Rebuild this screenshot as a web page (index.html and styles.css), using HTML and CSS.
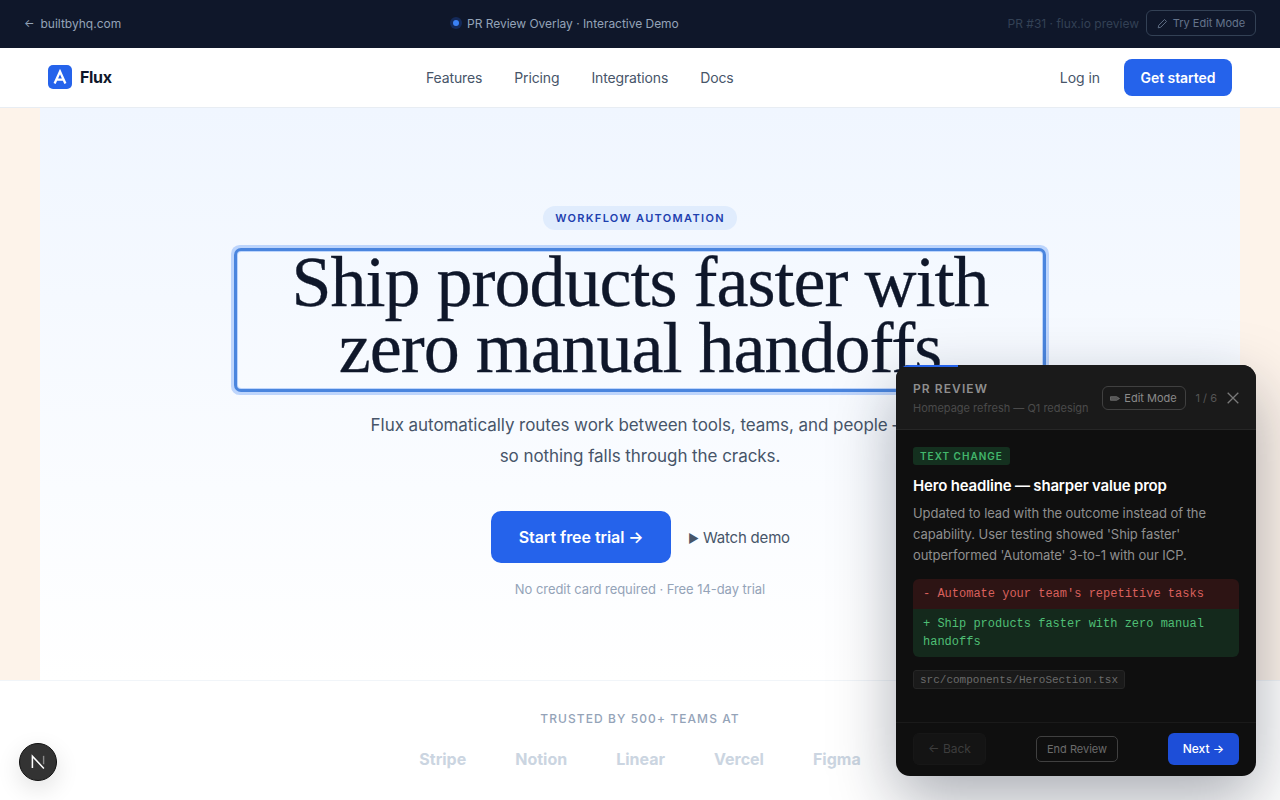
FILE: index.html
```html
<!DOCTYPE html>
<html lang="en">
<head>
<meta charset="utf-8">
<title>Flux</title>
<link rel="stylesheet" href="styles.css">
</head>
<body>
<header class="demo-bar">
  <a class="back-link"><span class="back-arrow">←</span> builtbyhq.com</a>
  <div class="demo-title"><span class="dot"></span>PR Review Overlay · Interactive Demo</div>
  <div class="demo-right">
    <span class="demo-meta">PR #31 · flux.io preview</span>
    <button class="try-btn">
      <svg class="pencil" viewBox="0 0 12 12" width="11" height="11"><path d="M8.2 1.6l2.2 2.2-6.3 6.3-2.8.6.6-2.8z" fill="none" stroke="currentColor" stroke-width="1"/></svg>
      Try Edit Mode</button>
  </div>
</header>
<nav class="site-nav">
  <div class="brand">
    <svg class="brand-mark" viewBox="0 0 24 24" width="24" height="24"><rect width="24" height="24" rx="5" fill="#2563eb"/><path d="M6.6 18.4L12 6.6l5.4 11.8M8.6 14.6h6.8" fill="none" stroke="#fff" stroke-width="2.3"/></svg>
    <span class="brand-name">Flux</span>
  </div>
  <div class="nav-links"><a>Features</a><a>Pricing</a><a>Integrations</a><a>Docs</a></div>
  <div class="nav-actions"><a class="login">Log in</a><button class="cta-small">Get started</button></div>
</nav>
<main>
  <section class="hero-wrap">
    <div class="hero">
      <span class="eyebrow">WORKFLOW AUTOMATION</span>
      <h1 class="headline"><span class="headline-text">Ship products faster with<br>zero manual handoffs</span></h1>
      <p class="sub">Flux automatically routes work between tools, teams, and people —<br>so nothing falls through the cracks.</p>
      <div class="cta-row">
        <button class="cta-main">Start free trial →</button>
        <a class="watch"><span class="play">▶</span> Watch demo</a>
      </div>
      <p class="note">No credit card required · Free 14-day trial</p>
    </div>
  </section>
  <section class="trusted">
    <p class="trusted-label">TRUSTED BY 500+ TEAMS AT</p>
    <div class="logos"><span>Stripe</span><span>Notion</span><span>Linear</span><span>Vercel</span><span>Figma</span></div>
  </section>
</main>
<button class="next-badge" aria-label="Next.js">
  <svg viewBox="0 0 20 20" width="28" height="28"><path d="M6 14.2V5.8l8.2 8.8" fill="none" stroke="#fff" stroke-width="1.1"/><path d="M14 5.6v6" fill="none" stroke="#8a8a8a" stroke-width="1"/></svg>
</button>
<aside class="review">
  <div class="progress"></div>
  <div class="review-head">
    <div class="head-text">
      <div class="head-title">PR REVIEW</div>
      <div class="head-sub">Homepage refresh — Q1 redesign</div>
    </div>
    <button class="edit-btn">
      <svg class="edit-icon" viewBox="0 0 10 5" width="10" height="5"><path d="M.5.7h6.2L9.5 2.5 6.7 4.3H.5z" fill="#555" stroke="#7a7a7a" stroke-width=".7"/></svg>
      Edit Mode</button>
    <span class="count">1 / 6</span>
    <svg class="close" viewBox="0 0 12 12" width="12" height="12"><path d="M.7.7l10.6 10.6M11.3.7L.7 11.3" stroke="#7a7a7a" stroke-width="1.3" fill="none"/></svg>
  </div>
  <div class="review-body">
    <span class="tag">TEXT CHANGE</span>
    <h2 class="change-title">Hero headline — sharper value prop</h2>
    <p class="change-desc">Updated to lead with the outcome instead of the capability. User testing showed 'Ship faster' outperformed 'Automate' 3-to-1 with our ICP.</p>
    <div class="diff">
      <div class="del">- Automate your team's repetitive tasks</div>
      <div class="add">+ Ship products faster with zero manual handoffs</div>
    </div>
    <code class="file">src/components/HeroSection.tsx</code>
  </div>
  <div class="review-foot">
    <button class="back-btn">← Back</button>
    <button class="end-btn">End Review</button>
    <button class="next-btn">Next →</button>
  </div>
</aside>
</body>
</html>
```
FILE: styles.css
```css
* { box-sizing: border-box; }
html, body { margin: 0; height: 800px; overflow: hidden; }
body { font-family: Inter, "Liberation Sans", sans-serif; background: #fff; color: #0f172a; letter-spacing: -.06px; }
button { font-family: inherit; letter-spacing: inherit; cursor: pointer; }
p, h1, h2 { margin: 0; }

.demo-bar { height: 48px; background: #0f172a; display: flex; justify-content: space-between; align-items: center; padding: 0 24px 2px; font-size: 12px; letter-spacing: 0; }
.back-link { color: #94a3b8; font-size: 12px; display: flex; gap: 6px; align-items: center; }
.back-arrow { font-size: 11px; }
.demo-title { color: #94a3b8; display: flex; align-items: center; gap: 5px; letter-spacing: -.03px; }
.dot { width: 6px; height: 6px; border-radius: 50%; background: #3b82f6; box-shadow: 0 0 0 3px rgba(37,99,235,.25); margin: 0 3px; }
.demo-right { display: flex; justify-content: flex-end; align-items: center; gap: 7px; }
.demo-meta { color: #334155; font-size: 12px; }
.try-btn { height: 26px; width: 110px; padding: 0; border: 1px solid #334155; border-radius: 6px; background: transparent; color: #64748b; font-size: 11px; display: flex; align-items: center; justify-content: center; gap: 5px; }
.pencil { flex: none; }

.site-nav { height: 60px; background: #fff; border-bottom: 1px solid #e8edf3; display: flex; justify-content: space-between; align-items: center; padding: 0 48px; }
.brand { display: flex; align-items: center; gap: 8px; margin-bottom: 2px; }
.brand-name { font-size: 16px; font-weight: 700; letter-spacing: -.02em; }
.nav-links { display: flex; gap: 32px; margin-right: 12px; font-size: 14px; color: #475569; letter-spacing: -.13px; }
.nav-actions { display: flex; justify-content: flex-end; align-items: center; gap: 24px; }
.login { font-size: 14px; color: #475569; }
.cta-small { height: 37px; width: 108px; border: 0; border-radius: 8px; background: #2563eb; color: #fff; font-size: 14px; font-weight: 600; }

.hero-wrap { height: 572px; background: #fdf3ea; padding: 0 40px; }
.hero { height: 572px; background: linear-gradient(#f0f6ff, #fff); display: flex; flex-direction: column; align-items: center; padding-top: 98px; }
.eyebrow { height: 24px; width: 194px; background: #e0ecfd; border-radius: 12px; color: #1e40af; font-size: 11px; font-weight: 600; letter-spacing: .12em; display: flex; align-items: center; justify-content: center; }
.headline { margin-top: 22px; width: 804px; height: 136px; font-family: "Liberation Serif", serif; font-weight: 400; font-size: 72px; line-height: 66px; letter-spacing: -1px; text-align: center; color: #0f172a; outline: 3px solid #4a85de; outline-offset: 1px; border-radius: 3px; box-shadow: 0 0 0 7px rgba(59,130,246,.3); }
.headline-text { display: block; margin-top: -3px; -webkit-text-stroke: .3px #0f172a; }
.sub { margin-top: 22px; font-size: 17px; line-height: 31px; text-align: center; color: #475569; white-space: nowrap; }
.cta-row { margin-top: 39px; display: flex; align-items: center; gap: 17px; }
.cta-main { width: 180px; height: 52px; border: 0; border-radius: 10px; background: #2563eb; color: #fff; font-size: 16px; font-weight: 600; }
.watch { font-size: 15px; color: #475569; letter-spacing: -.2px; margin-right: -1px; }
.play { font-size: 12px; }
.note { margin-top: 18px; font-size: 13px; color: #94a3b8; }

.trusted { border-top: 1px solid #f1f5f9; padding-top: 30px; }
.trusted-label { text-align: center; font-size: 12px; font-weight: 500; letter-spacing: 1.08px; color: #94a3b8; }
.logos { margin-top: 23px; display: flex; justify-content: center; gap: 49px; font-size: 16px; font-weight: 700; color: #cbd5e1; letter-spacing: 0; }

.next-badge { position: absolute; left: 19px; top: 743px; width: 38px; height: 38px; padding: 0; border-radius: 50%; border: 1px solid #111; background: #333; display: flex; align-items: center; justify-content: center; box-shadow: 0 8px 24px rgba(0,0,0,.12); }

.review { position: absolute; left: 896px; top: 365px; width: 360px; height: 411px; background: #0f0f0f; border-radius: 14px; overflow: hidden; box-shadow: 0 24px 64px rgba(15,23,42,.35), 0 0 0 1px rgba(255,255,255,.04); display: flex; flex-direction: column; letter-spacing: 0; }
.progress { position: absolute; left: 0; top: 0; width: 62px; height: 2px; background: #2563eb; }
.review-head { height: 65px; flex: none; background: #1a1a1a; border-bottom: 1px solid #262626; padding: 2px 16px 0 17px; display: flex; align-items: center; }
.head-text { flex: 1; }
.head-title { font-size: 12px; font-weight: 600; letter-spacing: .09em; color: #8f8f8f; line-height: 16px; }
.head-sub { font-size: 11px; color: #4a4a4a; line-height: 16px; margin-top: 3px; }
.edit-btn { width: 84px; height: 24px; padding: 0; border: 1px solid #404040; border-radius: 6px; background: transparent; color: #8a8a8a; font-size: 11px; margin-right: 2px; display: flex; align-items: center; justify-content: center; gap: 4px; }
.edit-icon { flex: none; }
.count { margin: 0 10px 0 8px; font-size: 11px; color: #555; }
.close { flex: none; margin-right: 1px; }
.review-body { flex: 1; padding: 17px 17px 0; display: flex; flex-direction: column; align-items: flex-start; }
.tag { height: 18px; padding: 0 7px; border-radius: 3px; background: #14301f; color: #43b76c; font-size: 10px; font-weight: 600; letter-spacing: .1em; display: flex; align-items: center; }
.change-title { margin-top: 11px; font-size: 15px; line-height: 20px; font-weight: 600; color: #fff; letter-spacing: -.18px; }
.change-desc { margin-top: 7px; font-size: 13px; line-height: 21px; color: #8f8f8f; letter-spacing: -.06px; }
.diff { margin-top: 13px; width: 326px; border-radius: 6px; overflow: hidden; font-family: "Liberation Mono", monospace; font-size: 12px; line-height: 18px; }
.del { background: #2d1414; color: #d9605c; padding: 6px 10px; }
.add { background: #14291c; color: #4fbf75; padding: 6px 10px; }
.file { margin-top: 13px; height: 19px; display: flex; align-items: center; padding: 0 6px; border: 1px solid #262626; border-radius: 3px; background: #1a1a1a; color: #6b6b6b; font-family: "Liberation Mono", monospace; font-size: 11px; }
.review-foot { height: 54px; flex: none; border-top: 1px solid #1a1a1a; padding: 0 17px 2px; display: flex; align-items: center; justify-content: space-between; }
.back-btn { width: 73px; height: 32px; border: 1px solid #171717; border-radius: 6px; background: #141414; color: #3d3d3d; font-size: 12px; padding: 0; }
.end-btn { width: 82px; height: 26px; border: 1px solid #404040; border-radius: 5px; background: transparent; color: #6b6b6b; font-size: 11px; padding: 0; }
.next-btn { width: 71px; height: 32px; border: 0; border-radius: 6px; background: #1d4ed8; color: #fff; font-size: 12px; font-weight: 500; padding: 0; }
```
